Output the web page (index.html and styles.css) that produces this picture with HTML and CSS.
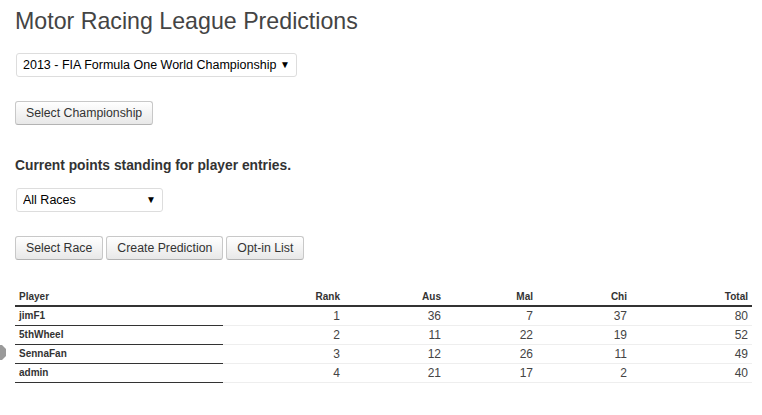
FILE: index.html
```html
<!DOCTYPE html>
<html>
<head>
<meta charset="utf-8">
<title>Motor Racing League Predictions</title>
<link rel="stylesheet" href="styles.css">
</head>
<body>
<div class="page">
  <h1 class="title">Motor Racing League Predictions</h1>
  <div class="select-wrap select-champ">
    <select class="select">
      <option>2013 - FIA Formula One World Championship</option>
    </select>
    <span class="caret">▼</span>
  </div>
  <div class="btn-row btn-row-champ">
    <button class="btn">Select Championship</button>
  </div>
  <h4 class="subhead">Current points standing for player entries.</h4>
  <div class="select-wrap select-race">
    <select class="select">
      <option>All Races</option>
    </select>
    <span class="caret">▼</span>
  </div>
  <div class="btn-row btn-row-race">
    <button class="btn">Select Race</button>
    <button class="btn">Create Prediction</button>
    <button class="btn">Opt-in List</button>
  </div>
  <table class="standings">
    <colgroup>
      <col class="c-player"><col class="c-rank"><col class="c-aus"><col class="c-mal"><col class="c-chi"><col class="c-total">
    </colgroup>
    <thead>
      <tr><th class="player">Player</th><th>Rank</th><th>Aus</th><th>Mal</th><th>Chi</th><th>Total</th></tr>
    </thead>
    <tbody>
      <tr><td class="player">jimF1</td><td>1</td><td>36</td><td>7</td><td>37</td><td>80</td></tr>
      <tr><td class="player">5thWheel</td><td>2</td><td>11</td><td>22</td><td>19</td><td>52</td></tr>
      <tr><td class="player">SennaFan</td><td>3</td><td>12</td><td>26</td><td>11</td><td>49</td></tr>
      <tr><td class="player">admin</td><td>4</td><td>21</td><td>17</td><td>2</td><td>40</td></tr>
    </tbody>
  </table>
</div>
<div class="side-tab"></div>
</body>
</html>
```

FILE: styles.css
```css
html, body {
  margin: 0;
  padding: 0;
  background: #fff;
}
body {
  font-family: "Liberation Sans", Arial, sans-serif;
  color: #333;
  position: relative;
  width: 762px;
  height: 415px;
  overflow: hidden;
}
.page {
  padding: 7px 10px 0 15px;
}
.title {
  margin: 0;
  font-size: 23.2px;
  line-height: 28px;
  font-weight: normal;
  color: #444;
}
.select-wrap {
  position: relative;
  display: inline-block;
  margin-left: 1px;
}
.select-champ { margin-top: 18px; width: 281px; }
.select-race { margin-top: 13px; width: 147px; }
.select {
  -webkit-appearance: none;
  appearance: none;
  display: block;
  width: 100%;
  height: 24px;
  box-sizing: border-box;
  border: 1px solid #ddd;
  border-radius: 3px;
  background: #fff;
  font-family: "Liberation Sans", Arial, sans-serif;
  font-size: 12.5px;
  color: #000;
  padding: 0 0 0 6px;
  margin: 0;
}
.caret {
  position: absolute;
  right: 7px;
  top: 6px;
  font-size: 10px;
  line-height: 12px;
  color: #000;
  pointer-events: none;
}
.btn-row {
  display: flex;
  gap: 3px;
}
.btn-row-champ { margin-top: 24px; }
.btn-row-race { margin-top: 24px; }
.btn {
  height: 24px;
  box-sizing: border-box;
  padding: 0 10px;
  border: 1px solid #c8c8c8;
  border-bottom-color: #b3b3b3;
  border-radius: 3px;
  background: linear-gradient(#ffffff, #e8e8e8);
  font-family: "Liberation Sans", Arial, sans-serif;
  font-size: 12.3px;
  color: #333;
  margin: 0;
}
.subhead {
  margin: 32px 0 0 0;
  font-size: 13.8px;
  line-height: 18px;
  font-weight: bold;
  color: #333;
}
.standings {
  margin-top: 26px;
  border-collapse: collapse;
  table-layout: fixed;
  width: 737px;
}
.c-player { width: 208px; }
.c-rank { width: 121px; }
.c-aus { width: 101px; }
.c-mal { width: 92px; }
.c-chi { width: 94px; }
.c-total { width: 121px; }
.standings th {
  font-size: 10px;
  line-height: 12px;
  font-weight: bold;
  color: #333;
  text-align: right;
  padding: 5px 4px 2px 4px;
  border-bottom: 2px solid #333;
}
.standings td {
  font-size: 12px;
  line-height: 14px;
  color: #444;
  text-align: right;
  padding: 2px 4px 2px 4px;
  border-bottom: 1px solid #eee;
}
.standings th.player,
.standings td.player {
  text-align: left;
}
.standings td.player {
  font-size: 10px;
  font-weight: bold;
  color: #333;
  border-bottom: 1px solid #333;
}
.side-tab {
  position: absolute;
  left: 0;
  top: 345px;
  width: 6px;
  height: 15px;
  background: #9a9a9a;
  clip-path: polygon(0 0, 2px 0, 6px 4px, 6px 11px, 2px 15px, 0 15px);
}
```
